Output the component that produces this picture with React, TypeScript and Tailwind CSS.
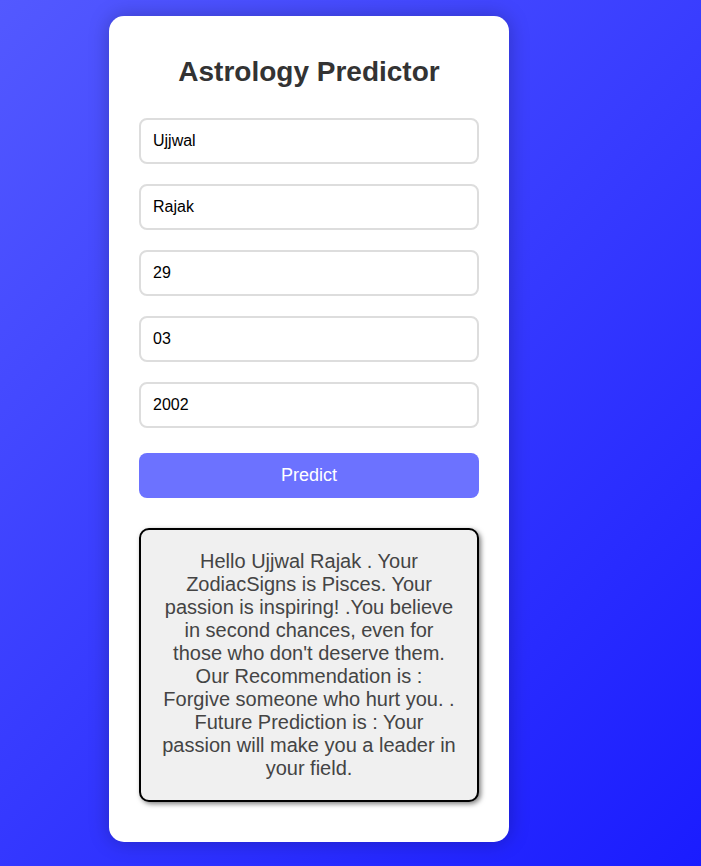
import React from "react";

const fields = ["Ujjwal", "Rajak", "29", "03", "2002"];

export default function App() {
  return (
    <div
      className="min-h-screen bg-[linear-gradient(135deg,#5359ff,#1a1cff)] pt-4 pb-6 pl-[109px]"
      style={{ fontFamily: '"Liberation Sans", Arial, sans-serif' }}
    >
      <div className="w-[400px] rounded-[15px] bg-white px-[30px] pt-10 pb-10 shadow-[0_0_20px_rgba(0,0,0,0.25)]">
        <h1 className="mb-[30px] text-center text-[28px] leading-[32px] font-bold text-[#333]">
          Astrology Predictor
        </h1>
        <div className="flex flex-col gap-5">
          {fields.map((v) => (
            <input
              key={v}
              defaultValue={v}
              className="h-[46px] w-full rounded-lg border-2 border-[#ddd] px-3 text-base text-black outline-none"
            />
          ))}
        </div>
        <button className="mt-[25px] h-[45px] w-full rounded-lg bg-[#6c72ff] text-[18px] text-white">
          Predict
        </button>
        <div className="mt-[30px] rounded-[10px] border-2 border-black bg-[#f0f0f0] p-5 text-center text-[20px] leading-[23px] text-[#444] shadow-[2px_2px_5px_rgba(0,0,0,0.5)]">
          Hello Ujjwal Rajak . Your ZodiacSigns is Pisces. Your passion is
          inspiring! .You believe in second chances, even for those who don't
          deserve them. Our Recommendation is : Forgive someone who hurt you. .
          Future Prediction is : Your passion will make you a leader in your
          field.
        </div>
      </div>
    </div>
  );
}
